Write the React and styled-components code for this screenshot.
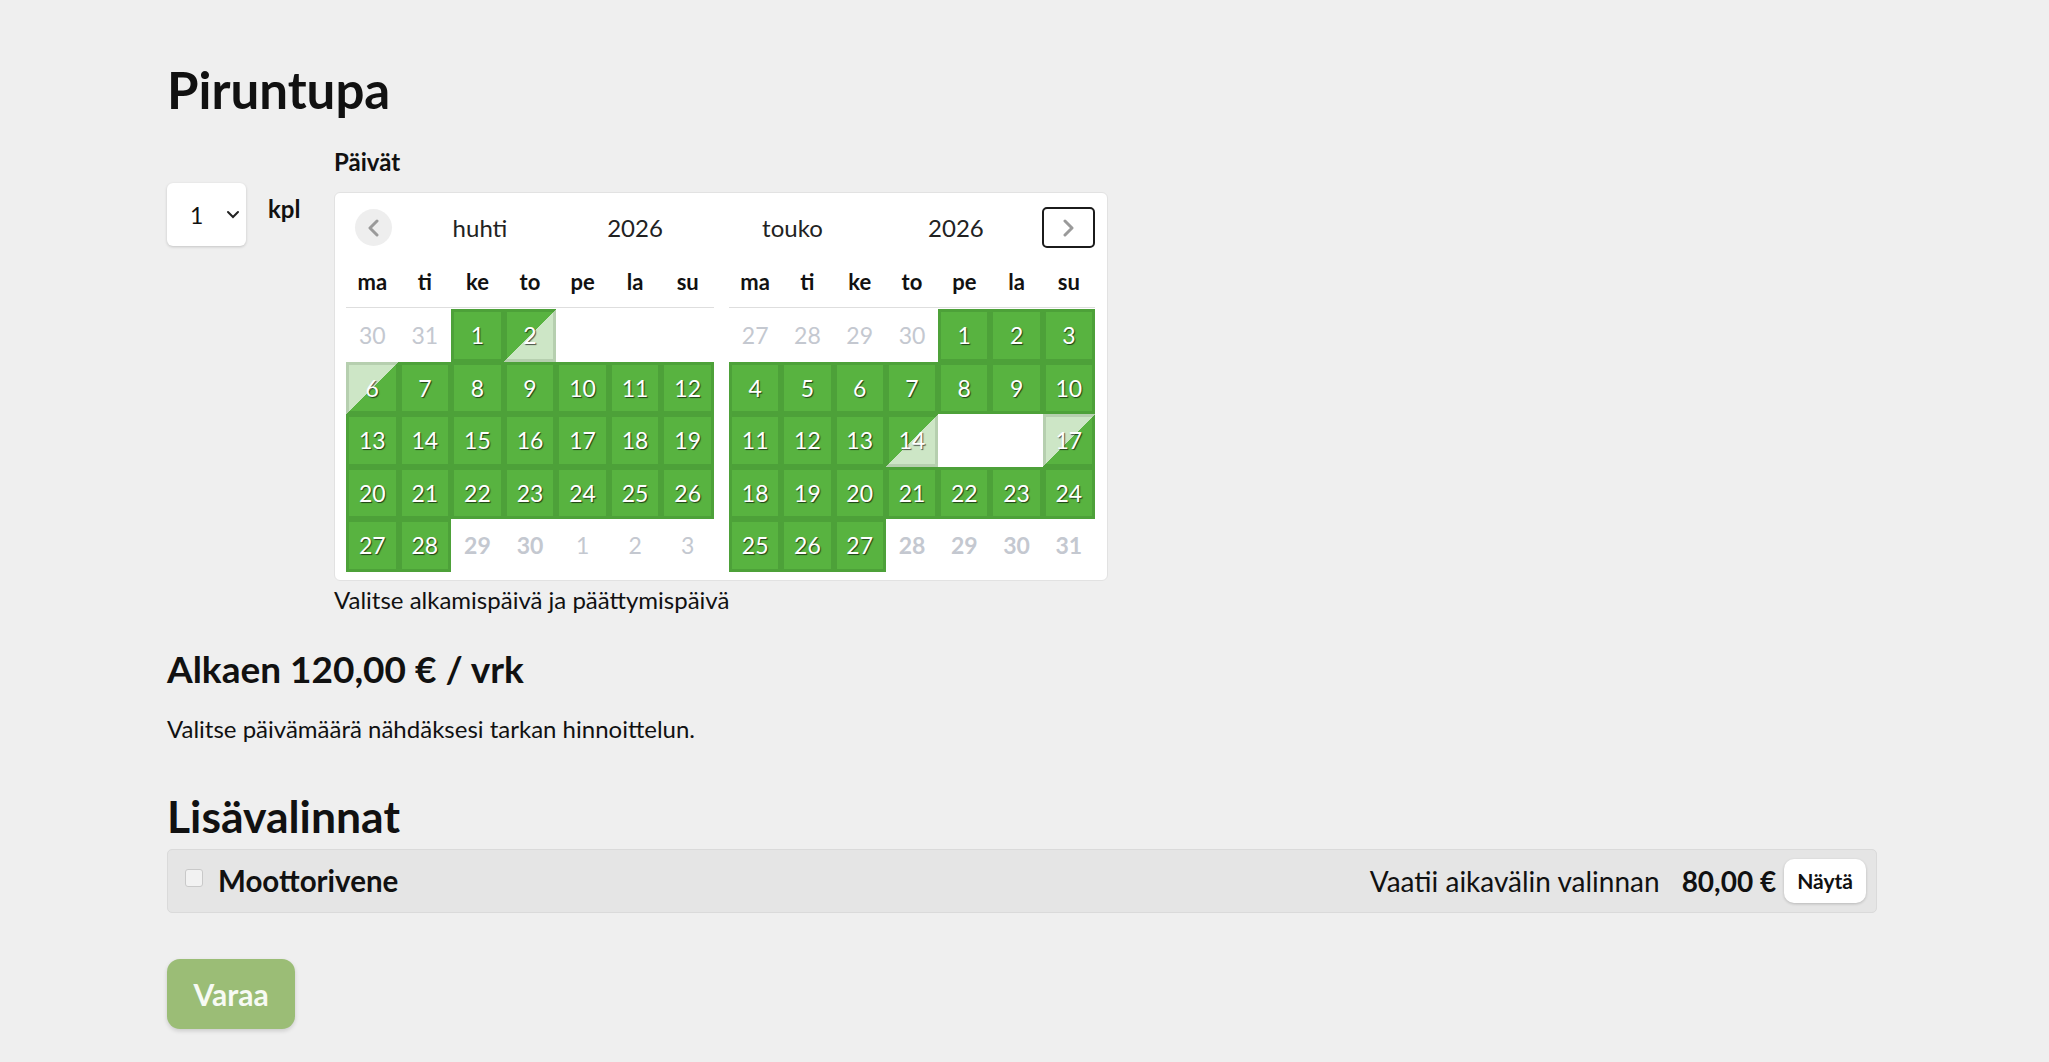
import React from 'react';
import styled, { createGlobalStyle, css } from 'styled-components';

const GlobalStyle = createGlobalStyle`
  body {
    margin: 0;
    background: #efefef;
    font-family: Lato, "Noto Sans", sans-serif;
    color: #111;
  }
`;

const GREEN = '#58b340';
const GREEN_EDGE = '#4da139';
const LIGHT = '#cde6c6';
const LIGHT_EDGE = '#b6cfaf';
const MUTED = '#c4c8d0';

const Page = styled.main`
  padding: 0 172px 40px 167px;
`;

const Title = styled.h1`
  margin: 59px 0 0;
  font-size: 51px;
  line-height: 62px;
  font-weight: 700;
`;

const BookingRow = styled.div`
  display: flex;
  align-items: flex-start;
  margin-top: 28px;
`;

const QtyGroup = styled.div`
  display: flex;
  align-items: flex-start;
  gap: 22px;
  width: 167px;
  margin-top: 34px;
`;

const SelectWrap = styled.div`
  position: relative;
  width: 79px;
  height: 63px;
  background: #fff;
  border-radius: 6px;
  box-shadow: 0 1px 3px rgba(0, 0, 0, 0.18);
`;

const Select = styled.select`
  appearance: none;
  width: 100%;
  height: 100%;
  border: none;
  background: transparent;
  font: 400 23px Lato, sans-serif;
  color: #111;
  padding: 0 0 0 23px;
  outline: none;
`;

const Chevron = styled.svg`
  position: absolute;
  right: 6px;
  top: 27px;
  pointer-events: none;
`;

const Unit = styled.span`
  margin-top: 12px;
  font-size: 24px;
  line-height: 28px;
  font-weight: 700;
`;

const DatesGroup = styled.div`
  display: flex;
  flex-direction: column;
`;

const FieldLabel = styled.label`
  font-size: 24px;
  line-height: 28px;
  font-weight: 700;
  margin-top: -1px;
  margin-bottom: 16px;
`;

const CalendarCard = styled.div`
  display: flex;
  gap: 15px;
  background: #fff;
  border: 1px solid #e2e2e2;
  border-radius: 6px;
  padding: 14px 12px 8px 11px;
`;

const MonthPanel = styled.div`
  width: ${p => p.$width}px;
`;

const MonthNav = styled.div`
  display: flex;
  align-items: center;
  height: 41px;
  font-size: 24px;
  color: #222;
`;

const NavLabel = styled.span`
  width: ${p => p.$width}px;
  padding-left: ${p => p.$offset || 0}px;
  text-align: center;
`;

const PrevButton = styled.button`
  width: 37px;
  height: 37px;
  margin-left: 9px;
  border: none;
  border-radius: 50%;
  background: #eeeeee;
  display: flex;
  align-items: center;
  justify-content: center;
  padding: 0;
`;

const NextButton = styled.button`
  width: 55px;
  height: 41px;
  margin-left: auto;
  border: 2px solid #1b1b1b;
  border-radius: 5px;
  background: #fff;
  display: flex;
  align-items: center;
  justify-content: center;
  padding: 0;
`;

const WeekHeader = styled.div`
  display: grid;
  grid-template-columns: repeat(7, 1fr);
  padding: 14px 0 5px;
  border-bottom: 1px solid #dedede;
  font-size: 22px;
  line-height: 40px;
  font-weight: 700;
  text-align: center;
`;

const DayGrid = styled.div`
  display: grid;
  grid-template-columns: repeat(7, 1fr);
  grid-auto-rows: 52.5px;
  margin-top: 1px;
`;

const split = (first, second) => css`
  border: 3px solid transparent;
  background:
    linear-gradient(to bottom right, ${first[0]} 50%, ${second[0]} 50%) padding-box,
    linear-gradient(to bottom right, ${first[1]} 50%, ${second[1]} 50%) border-box;
`;

const kinds = {
  free: css`
    background: ${GREEN};
    border: 3px solid ${GREEN_EDGE};
  `,
  checkout: split([GREEN, GREEN_EDGE], [LIGHT, LIGHT_EDGE]),
  checkin: split([LIGHT, LIGHT_EDGE], [GREEN, GREEN_EDGE]),
};

const Day = styled.div`
  box-sizing: border-box;
  display: flex;
  align-items: center;
  justify-content: center;
  font-size: 23px;
  color: #fff;
  text-shadow: 1px 1px 1px rgba(0, 0, 0, 0.65);
  ${p => kinds[p.$kind]}
  ${p => (p.$kind === 'other' || p.$kind === 'closed') && css`
    color: ${MUTED};
    text-shadow: none;
    font-weight: ${p.$kind === 'closed' ? 700 : 400};
  `}
`;

const Hint = styled.p`
  margin: 5px 0 0;
  font-size: 24px;
  line-height: 28px;
`;

const PriceHeading = styled.h2`
  margin: 33px 0 0;
  font-size: 37px;
  line-height: 44px;
  font-weight: 700;
`;

const BodyText = styled.p`
  margin: 24px 0 0;
  font-size: 24px;
  line-height: 28px;
`;

const SectionTitle = styled.h2`
  margin: 46px 0 0;
  font-size: 44.5px;
  line-height: 53px;
  font-weight: 700;
`;

const ExtraRow = styled.div`
  display: flex;
  align-items: center;
  height: 62px;
  margin-top: 7px;
  padding: 0 10px 0 17px;
  background: #e5e5e5;
  border: 1px solid #dadada;
  border-radius: 5px;
`;

const Checkbox = styled.input`
  appearance: none;
  width: 18px;
  height: 18px;
  margin: -6px 15px 0 0;
  border: 1px solid #c9c9c9;
  border-radius: 3px;
  background: #f2f2f2;
`;

const ExtraName = styled.span`
  flex: 1;
  font-size: 29.5px;
  font-weight: 700;
`;

const ExtraNote = styled.span`
  font-size: 28px;
  margin-right: 22px;
`;

const ExtraPrice = styled.span`
  font-size: 28px;
  font-weight: 700;
  margin-right: 8px;
`;

const ShowButton = styled.button`
  height: 44px;
  padding: 0 13px;
  border: none;
  border-radius: 10px;
  background: #fff;
  box-shadow: 0 1px 3px rgba(0, 0, 0, 0.2);
  font: 700 21px Lato, sans-serif;
  color: #111;
`;

const BookButton = styled.button`
  display: block;
  width: 128px;
  height: 70px;
  margin-top: 46px;
  border: none;
  border-radius: 13px;
  background: #9bbd76;
  box-shadow: 0 2px 4px rgba(0, 0, 0, 0.15);
  font: 700 30px Lato, sans-serif;
  color: #f7faf4;
`;

const range = (a, b, kind) => Array.from({ length: b - a + 1 }, (_, i) => ({ n: a + i, kind }));

const april = [
  ...range(30, 31, 'other'),
  { n: 1, kind: 'free' },
  { n: 2, kind: 'checkout' },
  ...range(3, 5, 'booked'),
  { n: 6, kind: 'checkin' },
  ...range(7, 28, 'free'),
  ...range(29, 30, 'closed'),
  ...range(1, 3, 'other'),
];

const may = [
  ...range(27, 30, 'other'),
  ...range(1, 13, 'free'),
  { n: 14, kind: 'checkout' },
  ...range(15, 16, 'booked'),
  { n: 17, kind: 'checkin' },
  ...range(18, 27, 'free'),
  ...range(28, 31, 'closed'),
];

const weekdays = ['ma', 'ti', 'ke', 'to', 'pe', 'la', 'su'];

const Arrow = ({ dir }) => (
  <svg width="14" height="18" viewBox="0 0 14 18">
    <path
      d={dir === 'left' ? 'M10 2 L3 9 L10 16' : 'M4 2 L11 9 L4 16'}
      fill="none"
      stroke="#9a9a9a"
      strokeWidth="3"
      strokeLinecap="round"
      strokeLinejoin="round"
    />
  </svg>
);

const Month = ({ width, days, children }) => (
  <MonthPanel $width={width}>
    <MonthNav>{children}</MonthNav>
    <WeekHeader>
      {weekdays.map(d => <span key={d}>{d}</span>)}
    </WeekHeader>
    <DayGrid>
      {days.map((d, i) => (
        <Day key={i} $kind={d.kind}>{d.kind === 'booked' ? '' : d.n}</Day>
      ))}
    </DayGrid>
  </MonthPanel>
);

const App = () => {
  return (
    <Page>
      <GlobalStyle />
      <Title>Piruntupa</Title>

      <BookingRow>
        <QtyGroup>
          <SelectWrap>
            <Select defaultValue="1">
              <option value="1">1</option>
              <option value="2">2</option>
            </Select>
            <Chevron width="14" height="10" viewBox="0 0 14 10">
              <path d="M2 2 L7 7 L12 2" fill="none" stroke="#222" strokeWidth="2" strokeLinecap="round" />
            </Chevron>
          </SelectWrap>
          <Unit>kpl</Unit>
        </QtyGroup>

        <DatesGroup>
          <FieldLabel>Päivät</FieldLabel>
          <CalendarCard>
            <Month width={368} days={april}>
              <PrevButton><Arrow dir="left" /></PrevButton>
              <NavLabel $width={176}>huhti</NavLabel>
              <NavLabel $width={134}>2026</NavLabel>
            </Month>
            <Month width={366} days={may}>
              <NavLabel $width={132}>touko</NavLabel>
              <NavLabel $width={179} $offset={14}>2026</NavLabel>
              <NextButton><Arrow dir="right" /></NextButton>
            </Month>
          </CalendarCard>
          <Hint>Valitse alkamispäivä ja päättymispäivä</Hint>
        </DatesGroup>
      </BookingRow>

      <PriceHeading>Alkaen 120,00 € / vrk</PriceHeading>
      <BodyText>Valitse päivämäärä nähdäksesi tarkan hinnoittelun.</BodyText>

      <SectionTitle>Lisävalinnat</SectionTitle>
      <ExtraRow>
        <Checkbox type="checkbox" />
        <ExtraName>Moottorivene</ExtraName>
        <ExtraNote>Vaatii aikavälin valinnan</ExtraNote>
        <ExtraPrice>80,00 €</ExtraPrice>
        <ShowButton>Näytä</ShowButton>
      </ExtraRow>

      <BookButton>Varaa</BookButton>
    </Page>
  );
};

export default App;
